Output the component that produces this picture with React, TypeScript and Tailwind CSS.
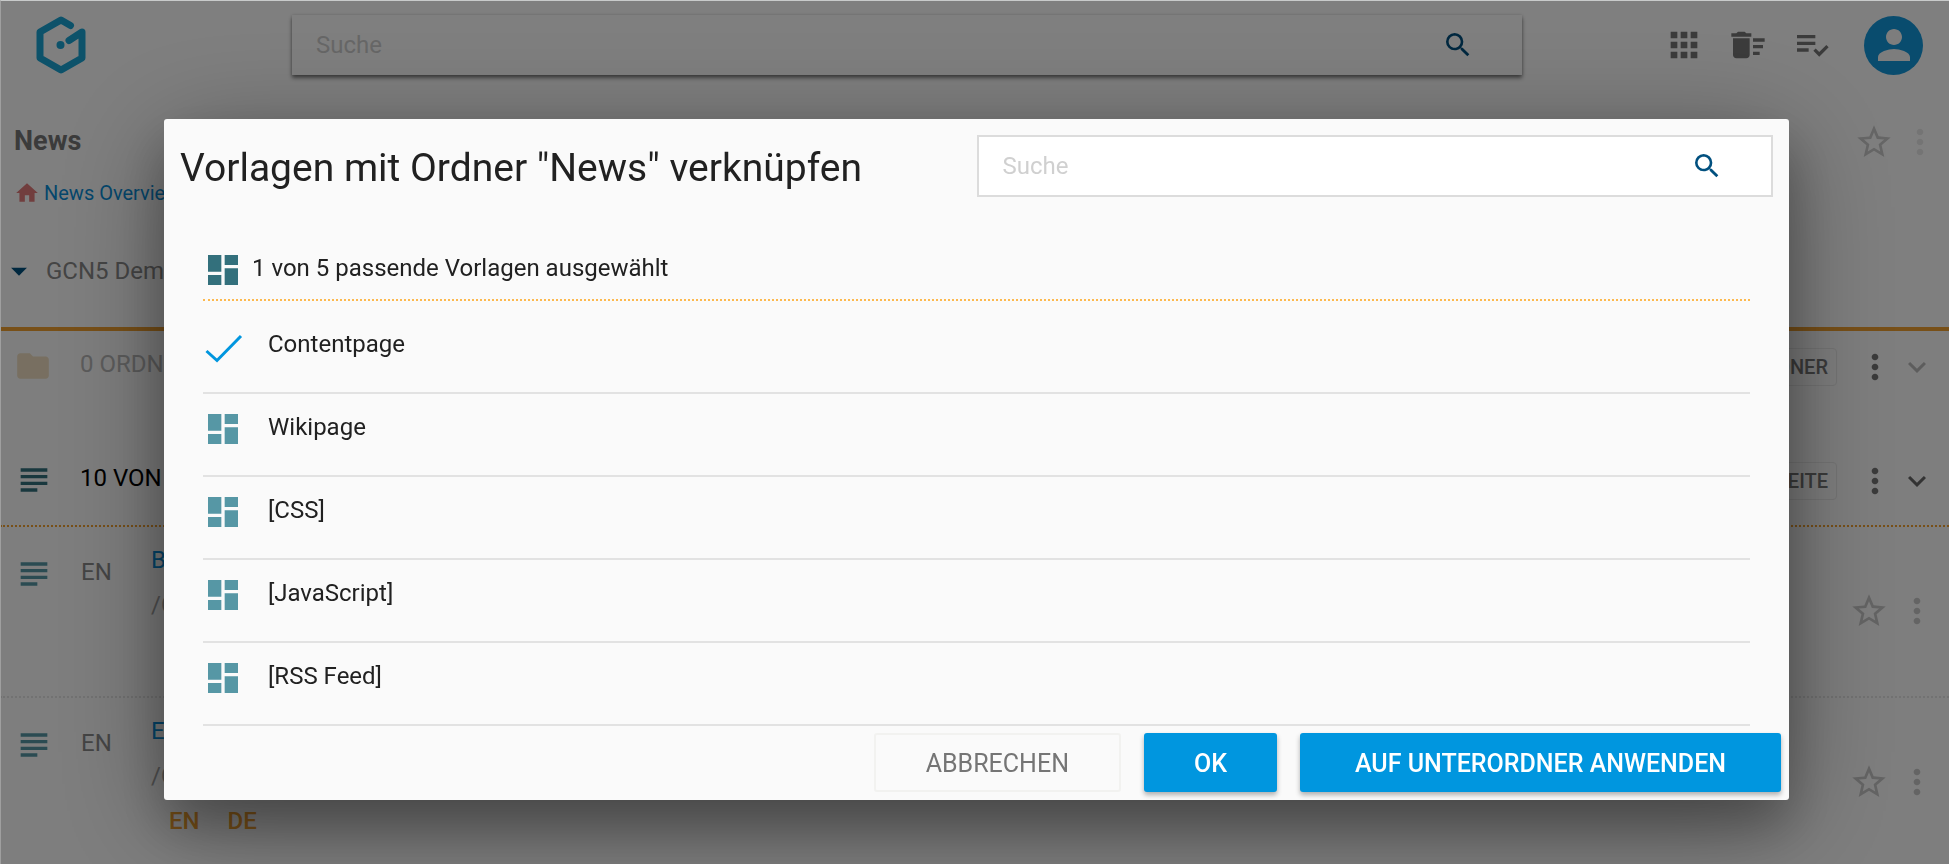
import type { ReactNode } from "react";
import {
  MdApps,
  MdArrowDropDown,
  MdDashboard,
  MdDeleteSweep,
  MdFolder,
  MdHome,
  MdMoreVert,
  MdPerson,
  MdPlaylistAddCheck,
  MdSearch,
  MdStarBorder,
  MdSubject,
  MdExpandMore,
} from "react-icons/md";

const templates = [
  { name: "Contentpage", selected: true },
  { name: "Wikipage", selected: false },
  { name: "[CSS]", selected: false },
  { name: "[JavaScript]", selected: false },
  { name: "[RSS Feed]", selected: false },
];

const pages = [
  { title: "Blog", path: "/Content", languages: [] },
  { title: "Events", path: "/Content", languages: ["EN", "DE"] },
];

function Logo() {
  return (
    <svg viewBox="0 0 50 58" className="h-[58px] w-[50px]" fill="none" stroke="#1ba5d5" strokeWidth="7" strokeLinejoin="round">
      <path d="M34.500 9.500 25 4 4 16v26l21 12 21-12V16L33 24.500" strokeLinecap="round" />
      <circle cx="24.500" cy="29" r="4" fill="#1ba5d5" stroke="none" />
    </svg>
  );
}

function IconButton({ label, className, children }: { label: string; className?: string; children: ReactNode }) {
  return (
    <button type="button" aria-label={label} className={`flex shrink-0 items-center justify-center ${className ?? ""}`}>
      {children}
    </button>
  );
}

function TopBar() {
  return (
    <header className="flex h-[90px] items-center pl-9 pr-[26px]">
      <Logo />
      <label className="ml-[206px] flex h-[60px] flex-1 items-center bg-white pl-6 pr-12 shadow-[0_3px_4px_rgba(0,0,0,0.5),0_0_3px_rgba(0,0,0,0.15)]">
        <input type="search" placeholder="Suche" className="min-w-0 flex-1 text-2xl outline-none placeholder:text-[#cfcfcf]" />
        <MdSearch className="size-8 text-[#01507f]" />
      </label>
      <div className="ml-[142px] flex items-center">
        <IconButton label="Apps" className="mr-6 text-[#777]"><MdApps className="size-10" /></IconButton>
        <IconButton label="Papierkorb" className="mr-6 text-[#777]"><MdDeleteSweep className="size-10" /></IconButton>
        <IconButton label="Aufgaben" className="mr-8 text-[#777]"><MdPlaylistAddCheck className="size-10" /></IconButton>
        <IconButton label="Benutzer" className="size-[59px] rounded-full bg-[#1298dc] text-[#fafafa]"><MdPerson className="size-12" /></IconButton>
      </div>
    </header>
  );
}

function SectionHeader({ icon, title, action, muted }: { icon: ReactNode; title: string; action: string; muted?: boolean }) {
  return (
    <div className="flex h-[72px] items-center pr-[14px]">
      <div className="ml-[14px] w-[66px] pb-[2px]">{icon}</div>
      <h2 className={muted ? "flex-1 pb-[6px] text-2xl text-[#b8b8b8]" : "flex-1 pb-[6px] text-2xl text-black"}>{title}</h2>
      <button type="button" className="h-[38px] rounded-sm border border-[#eaeaea] px-2 text-xl font-medium text-[#777]">{action}</button>
      <IconButton label="Mehr" className="ml-[18px] text-[#777]"><MdMoreVert className="size-10" /></IconButton>
      <IconButton label="Aufklappen" className={muted ? "ml-1 text-[#bbb]" : "ml-1 text-[#666]"}><MdExpandMore className="size-9" /></IconButton>
    </div>
  );
}

function Page({ title, path, languages }: { title: string; path: string; languages: string[] }) {
  return (
    <li className="flex h-[171px] items-start border-b-2 border-dotted border-[#e4e4e4] pr-3">
      <MdSubject className="ml-[14px] mt-[27px] size-10 text-[#5697a5]" />
      <span className="mt-[29px] ml-[27px] w-[70px] text-2xl leading-8 text-[#8a8a8a]">EN</span>
      <div className="flex-1 pt-[17px] text-2xl leading-8">
        <a href="#" className="block text-[#0a8ed9]">{title}</a>
        <p className="mt-[13px] text-[#a5a5a5]">{path}</p>
        <div className="mt-[13px] ml-[18px] flex gap-7 font-medium text-[#f0a030]">
          {languages.map((language) => (
            <span key={language}>{language}</span>
          ))}
        </div>
      </div>
      <div className="mt-16 flex items-center gap-2 text-[#c8c8c8]">
        <IconButton label="Favorit"><MdStarBorder className="size-10" /></IconButton>
        <IconButton label="Mehr"><MdMoreVert className="size-10" /></IconButton>
      </div>
    </li>
  );
}

function TemplateDialog() {
  return (
    <div role="dialog" aria-labelledby="dialog-title" className="flex w-full flex-col rounded-[3px] bg-[#fafafa] text-[#212121] shadow-[0_27px_50px_rgba(0,0,0,0.25),0_20px_110px_rgba(0,0,0,0.35)]">
      <div className="flex items-start justify-between pl-4 pr-4 pt-4">
        <h1 id="dialog-title" className="pt-[6px] text-[39px] leading-[54px]">Vorlagen mit Ordner "News" verknüpfen</h1>
        <label className="flex h-[62px] w-1/2 items-center border-2 border-[#dcdcdc] bg-white pl-6 pr-12">
          <input type="search" placeholder="Suche" className="min-w-0 flex-1 text-2xl outline-none placeholder:text-[#d0d0d0]" />
          <MdSearch className="size-8 text-[#01507f]" />
        </label>
      </div>
      <div className="mt-12 ml-[39px] mr-[39px]">
        <div className="flex h-14 items-start border-b-2 border-dotted border-[#fdb94e]">
          <MdDashboard className="mt-[5px] size-10 text-[#33707c]" />
          <span className="ml-[9px] mt-[7px] text-2xl leading-8">1 von 5 passende Vorlagen ausgewählt</span>
        </div>
        <ul className="pt-[10px]">
          {templates.map((template) => (
            <li key={template.name} className="flex h-[83px] items-start border-b-2 border-[#e2e2e2]">
              {template.selected ? (
                <svg viewBox="0 0 40 40" className="mt-[15px] size-10" fill="none" stroke="#0096df" strokeWidth="3">
                  <path d="M3.500 25 14 34.500 38 10" />
                </svg>
              ) : (
                <MdDashboard className="mt-[15px] size-10 text-[#5697a5]" />
              )}
              <span className="ml-[25px] mt-[17px] text-2xl leading-8">{template.name}</span>
            </li>
          ))}
        </ul>
      </div>
      <div className="flex justify-end gap-[23px] px-2 pb-2 pt-[7px] text-[25px] font-medium">
        <button type="button" className="h-[59px] rounded-[3px] border-2 border-[#f2f2f0] px-[50px] pt-[2px] font-normal text-[#757575]">ABBRECHEN</button>
        <button type="button" className="h-[59px] rounded-[3px] bg-[#0096df] px-[50px] pt-[2px] text-white shadow-[0_3px_5px_rgba(0,0,0,0.3)]">OK</button>
        <button type="button" className="h-[59px] rounded-[3px] bg-[#0096df] px-[55px] pt-[2px] text-white shadow-[0_3px_5px_rgba(0,0,0,0.3)]">AUF UNTERORDNER ANWENDEN</button>
      </div>
    </div>
  );
}

export default function App() {
  return (
    <div className="h-screen overflow-hidden bg-white font-[Roboto,sans-serif]">
      <TopBar />
      <div className="flex h-[237px] items-start justify-between pr-[9px]">
        <div>
          <h1 className="mt-[31px] ml-[14px] text-[27px] font-bold leading-10 text-[#777]">News</h1>
          <a href="#" className="ml-[14px] mt-4 flex items-center gap-1 text-xl leading-8 text-[#0a8ed9]">
            <MdHome className="size-[26px] text-[#e27c7c]" />
            News Overview
          </a>
          <div className="mt-[43px] flex items-center text-2xl leading-8 text-[#8a8a8a]">
            <MdArrowDropDown className="size-[38px] text-[#01507f]" />
            <span className="ml-2">GCN5 Demo</span>
          </div>
        </div>
        <div className="mt-8 flex items-center gap-[6px] text-[#ccc]">
          <IconButton label="Favorit"><MdStarBorder className="size-10" /></IconButton>
          <IconButton label="Mehr" className="text-[#e9e9e9]"><MdMoreVert className="size-10" /></IconButton>
        </div>
      </div>
      <main className="border-t-4 border-[#f0a030] bg-[#fcfcfc]">
        <SectionHeader icon={<MdFolder className="size-[38px] text-[#f0dfc2]" />} title="0 ORDNER" action="NEUER ORDNER" muted />
        <section className="pt-[42px]">
          <div className="border-b-2 border-dotted border-[#f0a030] pb-2">
            <SectionHeader icon={<MdSubject className="size-10 text-[#33707c]" />} title="10 VON 10 SEITEN" action="NEUE SEITE" />
          </div>
          <ul>
            {pages.map((page) => (
              <Page key={page.title} {...page} />
            ))}
          </ul>
        </section>
      </main>
      <div className="fixed inset-0 flex items-start justify-center border-l border-t border-l-[#9f9f9f] border-t-[#c8caca] bg-black/50 pl-[163px] pr-[160px] pt-[118px]">
        <TemplateDialog />
      </div>
    </div>
  );
}
